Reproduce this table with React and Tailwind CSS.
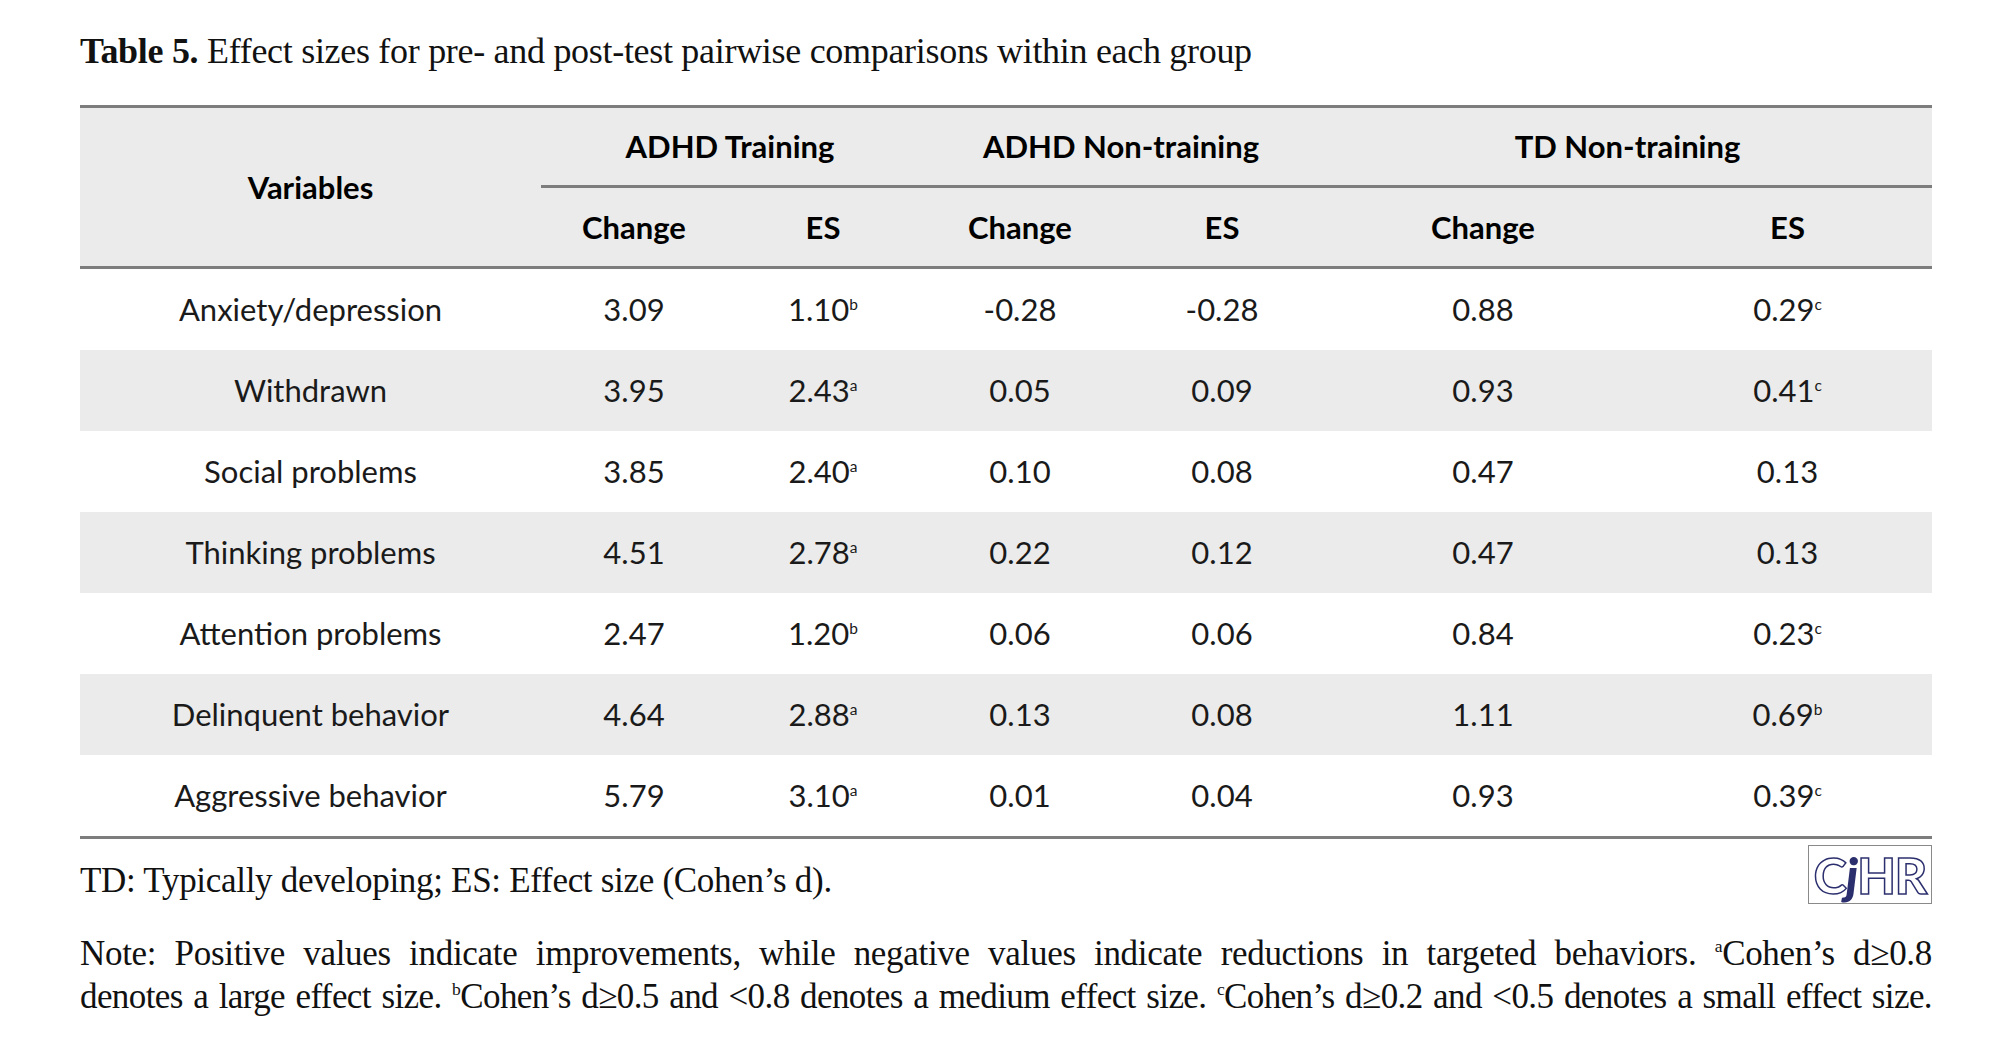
const rows = [
  ['Anxiety/depression', '3.09', ['1.10', 'b'], '-0.28', '-0.28', '0.88', ['0.29', 'c']],
  ['Withdrawn', '3.95', ['2.43', 'a'], '0.05', '0.09', '0.93', ['0.41', 'c']],
  ['Social problems', '3.85', ['2.40', 'a'], '0.10', '0.08', '0.47', ['0.13', '']],
  ['Thinking problems', '4.51', ['2.78', 'a'], '0.22', '0.12', '0.47', ['0.13', '']],
  ['Attention problems', '2.47', ['1.20', 'b'], '0.06', '0.06', '0.84', ['0.23', 'c']],
  ['Delinquent behavior', '4.64', ['2.88', 'a'], '0.13', '0.08', '1.11', ['0.69', 'b']],
  ['Aggressive behavior', '5.79', ['3.10', 'a'], '0.01', '0.04', '0.93', ['0.39', 'c']],
]

function Sup({ children }) {
  return <span className="relative -top-[0.75em] text-[0.5em] leading-none">{children}</span>
}

function Cell({ value, shaded }) {
  const [num, sup] = Array.isArray(value) ? value : [value, '']
  return (
    <div className={`h-[81px] flex items-center justify-center ${shaded ? 'bg-[#ebebeb]' : 'bg-white'}`}>
      <span>
        {num}
        {sup && <Sup>{sup}</Sup>}
      </span>
    </div>
  )
}

function Logo() {
  return (
    <div className="w-[124px] h-[59px] border border-[#8a8a8a] flex items-center justify-center font-['Lato',sans-serif] font-black text-[50px] leading-none tracking-[-1px]">
      <span className="text-white [-webkit-text-stroke:1.5px_#2c2f6e]">C</span>
      <span className="text-[#2c2f6e] italic">j</span>
      <span className="text-white [-webkit-text-stroke:1.5px_#2c2f6e]">HR</span>
    </div>
  )
}

const head = 'bg-[#ebebeb] border-b-[3px] border-[#7d7d7d] flex items-center justify-center font-bold text-black'

export default function App() {
  return (
    <div className="w-[2000px] h-[1050px] bg-white font-['Liberation_Serif',serif] text-[#111]">
      <div className="ml-[80px] w-[1852px] pt-[31px]">
        <h1 className="text-[36px] leading-[40px] tracking-[-0.3px]">
          <span className="font-bold">Table 5.</span> Effect sizes for pre- and post-test pairwise comparisons within each group
        </h1>

        <div className="mt-[34px] border-t-[3px] border-b-[3px] border-[#7d7d7d] grid grid-cols-[461px_186px_192px_202px_202px_320px_289px] font-['Lato',sans-serif] text-[31px] text-[#1a1a1a]">
          <div className={`row-span-2 ${head}`}>Variables</div>
          <div className={`col-span-2 h-[80px] ${head}`}>ADHD Training</div>
          <div className={`col-span-2 h-[80px] ${head}`}>ADHD Non-training</div>
          <div className={`col-span-2 h-[80px] ${head}`}>TD Non-training</div>
          {['Change', 'ES', 'Change', 'ES', 'Change', 'ES'].map((h, i) => (
            <div key={i} className={`h-[81px] ${head}`}>
              {h}
            </div>
          ))}
          {rows.map((r, ri) =>
            r.map((v, ci) => <Cell key={`${ri}-${ci}`} value={v} shaded={ri % 2 === 1} />)
          )}
        </div>

        <div className="mt-[6px] flex items-start justify-between">
          <p className="mt-[16px] text-[35px] leading-[40px] tracking-[-0.3px]">
            TD: Typically developing; ES: Effect size (Cohen’s d).
          </p>
          <Logo />
        </div>

        <div className="mt-[28px] text-[35px] leading-[43px] tracking-[-0.3px]">
          <p className="text-justify [text-align-last:justify]">
            Note: Positive values indicate improvements, while negative values indicate reductions in targeted behaviors. <Sup>a</Sup>Cohen’s d≥0.8
          </p>
          <p className="text-justify [text-align-last:justify] tracking-[-0.6px]">
            denotes a large effect size. <Sup>b</Sup>Cohen’s d≥0.5 and &lt;0.8 denotes a medium effect size. <Sup>c</Sup>Cohen’s d≥0.2 and &lt;0.5 denotes a small effect size.
          </p>
        </div>
      </div>
    </div>
  )
}
